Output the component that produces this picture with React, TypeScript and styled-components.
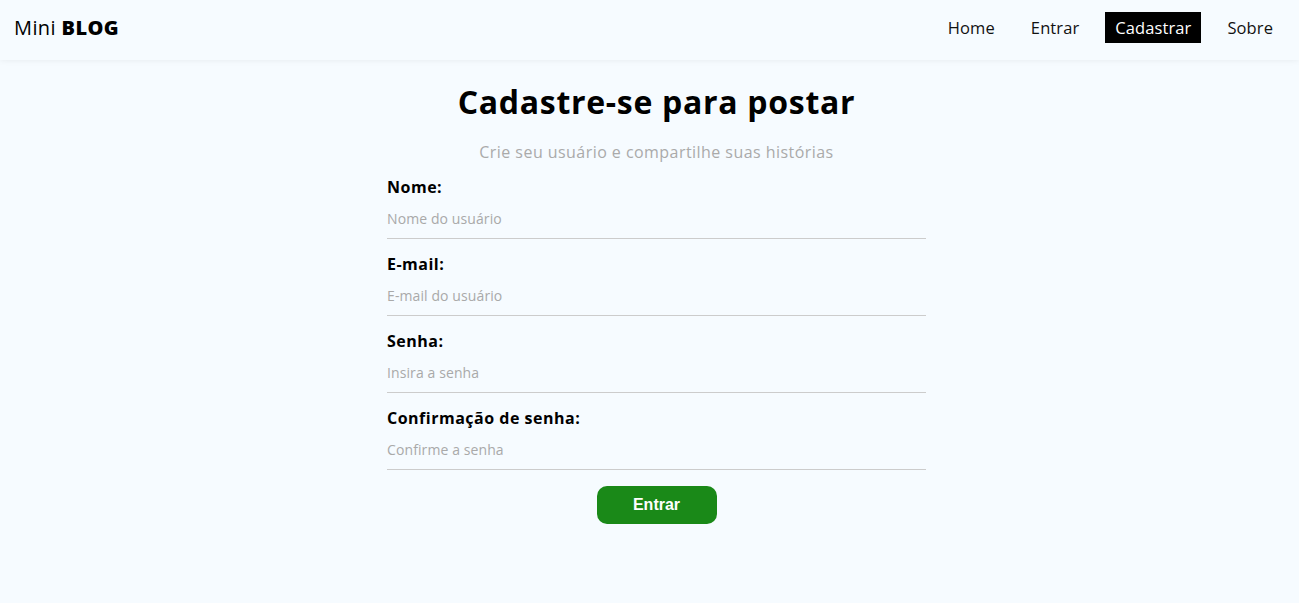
import React from "react";
import styled, { createGlobalStyle } from "styled-components";

const GlobalStyle = createGlobalStyle`
  * { box-sizing: border-box; }
  body {
    margin: 0;
    background-color: #f6fbff;
    font-family: "Open Sans", "DejaVu Sans", sans-serif;
    color: #000;
  }
`;

const Page = styled.div`
  min-height: 603px;
  display: flex;
  flex-direction: column;
`;

const Navbar = styled.nav`
  height: 60px;
  display: flex;
  align-items: center;
  justify-content: space-between;
  padding: 0 16px 5px 14px;
  box-shadow: rgba(0, 0, 0, 0.12) 0px -2px 8px 0px;
`;

const Brand = styled.a`
  font-size: 20px;
  letter-spacing: 0.4px;
  color: #000;
  text-decoration: none;
  span {
    font-weight: 800;
    text-transform: uppercase;
  }
`;

const NavList = styled.ul`
  display: flex;
  list-style: none;
  margin: 0;
  padding: 0;
  gap: 16px;
`;

const NavLink = styled.a<{ $active?: boolean }>`
  display: block;
  padding: 6px 10px;
  font-size: 16.5px;
  line-height: 19px;
  letter-spacing: 0.1px;
  text-decoration: none;
  color: ${(p) => (p.$active ? "#fff" : "#111")};
  background-color: ${(p) => (p.$active ? "#000" : "transparent")};
`;

const Main = styled.main`
  display: flex;
  flex-direction: column;
  align-items: center;
  padding-left: 14px;
`;

const Title = styled.h1`
  margin: 22px 0 0;
  font-size: 32px;
  line-height: 40px;
  letter-spacing: 0.7px;
  font-weight: 700;
`;

const Subtitle = styled.p`
  margin: 20px 0 0;
  font-size: 16px;
  line-height: 20px;
  letter-spacing: 0.45px;
  color: #aaa;
`;

const Form = styled.form`
  width: 539px;
  margin-top: 15px;
  display: flex;
  flex-direction: column;
  gap: 15px;
`;

const Field = styled.label`
  display: flex;
  flex-direction: column;
`;

const LabelText = styled.span`
  font-weight: 700;
  font-size: 16px;
  line-height: 20px;
  letter-spacing: 0.5px;
`;

const Input = styled.input`
  border: none;
  border-bottom: 1px solid #ccc;
  background: transparent;
  height: 42px;
  padding: 2px 0 0;
  font-family: inherit;
  font-size: 14px;
  letter-spacing: 0.1px;
  outline: none;
  &::placeholder {
    color: #a9a9a9;
  }
`;

const Button = styled.button`
  align-self: center;
  margin-top: 1px;
  width: 120px;
  height: 38px;
  border: none;
  border-radius: 10px;
  background-color: #1a8918;
  color: #fff;
  font-family: "Liberation Sans", Arial, sans-serif;
  font-weight: 700;
  font-size: 16px;
  cursor: pointer;
`;

const fields = [
  { label: "Nome:", type: "text", placeholder: "Nome do usuário" },
  { label: "E-mail:", type: "email", placeholder: "E-mail do usuário" },
  { label: "Senha:", type: "password", placeholder: "Insira a senha" },
  { label: "Confirmação de senha:", type: "password", placeholder: "Confirme a senha" },
];

export default function App() {
  return (
    <Page>
      <GlobalStyle />
      <Navbar>
        <Brand href="#">
          Mini <span>Blog</span>
        </Brand>
        <NavList>
          <li><NavLink href="#">Home</NavLink></li>
          <li><NavLink href="#">Entrar</NavLink></li>
          <li><NavLink href="#" $active>Cadastrar</NavLink></li>
          <li><NavLink href="#">Sobre</NavLink></li>
        </NavList>
      </Navbar>
      <Main>
        <Title>Cadastre-se para postar</Title>
        <Subtitle>Crie seu usuário e compartilhe suas histórias</Subtitle>
        <Form onSubmit={(e) => e.preventDefault()}>
          {fields.map((f, i) => (
            <Field key={f.label}>
              <LabelText>{f.label}</LabelText>
              <Input type={f.type} placeholder={f.placeholder} autoFocus={i === 0} />
            </Field>
          ))}
          <Button type="submit">Entrar</Button>
        </Form>
      </Main>
    </Page>
  );
}
